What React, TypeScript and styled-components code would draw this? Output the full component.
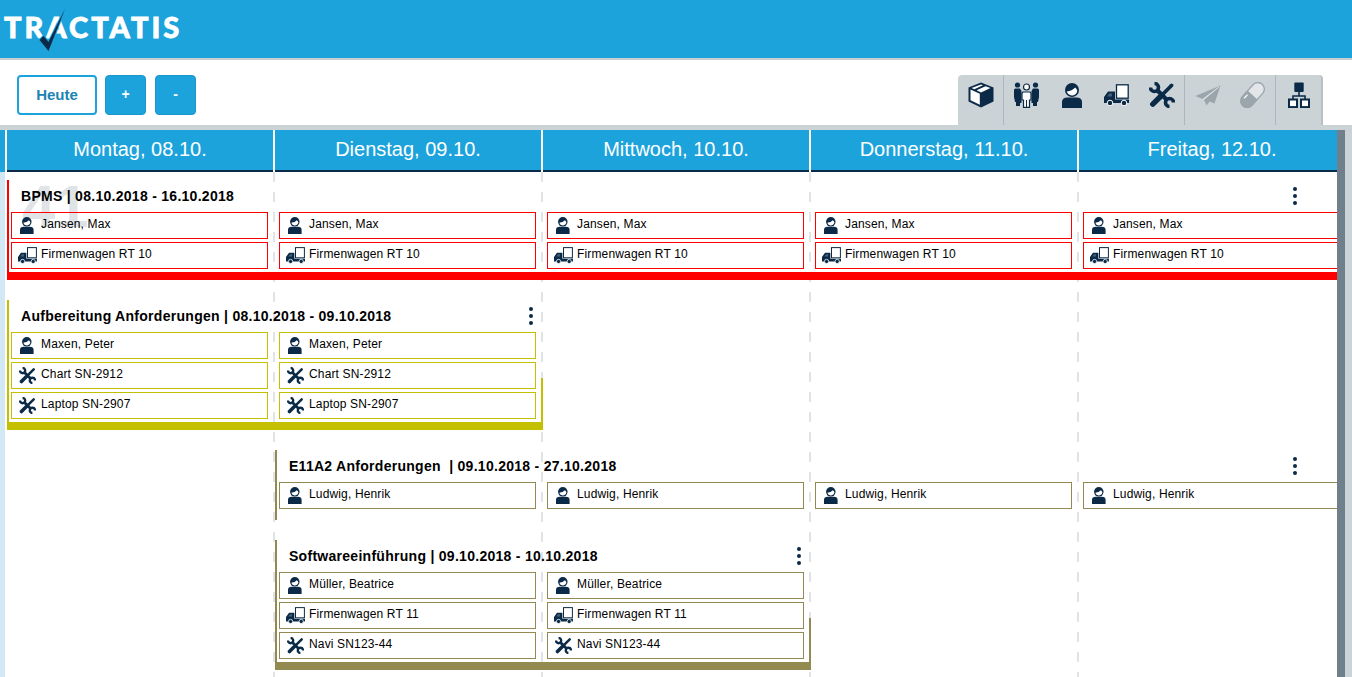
import { FC } from "react";
import styled, { createGlobalStyle } from "styled-components";

const BLUE = "#1ca3dc";
const NAVY = "#0a2a47";
const PANEL = "#ccd3d7";
const DISABLED = "#9aa6ac";
const DASH = "#e0e4e7";

const GlobalStyle = createGlobalStyle`
  html, body {
    margin: 0;
    padding: 0;
    height: 100%;
    overflow: hidden;
    background: #fff;
    font-family: "Liberation Sans", Arial, sans-serif;
  }
  * { box-sizing: border-box; }
`;

const Page = styled.div`
  display: flex;
  flex-direction: column;
  height: 677px;
  overflow: hidden;
`;

const TopBar = styled.header`
  flex: none;
  position: relative;
  height: 60px;
  background: ${BLUE};
  border-bottom: 2px solid #c9cfd2;
`;
const LogoText = styled.span`
  display: block;
  padding: 11px 0 0 4px;
  font-family: Lato, "Liberation Sans", sans-serif;
  font-size: 29px;
  line-height: 32px;
  font-weight: 900;
  letter-spacing: 3px;
  -webkit-text-stroke: 0.8px #fff;
  color: #fff;
`;
const LogoCheck = styled.svg`
  position: absolute;
  left: 0;
  top: 0;
`;

const Toolbar = styled.div`
  flex: none;
  display: flex;
  justify-content: space-between;
  height: 65px;
  padding: 15px 29px 0 17px;
`;
const ButtonRow = styled.div`
  display: flex;
  gap: 8px;
`;
const TodayBtn = styled.button`
  width: 80px;
  height: 40px;
  background: #fff;
  border: 2px solid ${BLUE};
  border-radius: 4px;
  color: #1a84b3;
  font-family: inherit;
  font-size: 15px;
  font-weight: bold;
  padding: 0 0 2px;
`;
const StepBtn = styled.button`
  width: 41px;
  height: 40px;
  background: ${BLUE};
  border: 1px solid #1a96cb;
  border-radius: 4px;
  color: #fff;
  font-family: inherit;
  font-size: 14px;
  font-weight: bold;
  padding: 0 0 3px;

  & + & {
    margin-left: 1px;
  }
`;

const TabPanel = styled.div`
  display: flex;
  height: 50px;
  background: ${PANEL};
  border-radius: 4px 4px 0 0;
  border-right: 2px solid #b8c0c5;
`;
const TabGroup = styled.div`
  display: flex;
  & + & {
    border-left: 1px solid #aeb7bc;
  }
`;
const TabBtn = styled.div`
  display: flex;
  align-items: center;
  justify-content: center;
  width: 45px;
  height: 40px;
`;

const Calendar = styled.div`
  flex: 1;
  display: flex;
  min-height: 0;
  background: ${PANEL};
  padding-top: 5px;
`;
const Main = styled.div`
  display: flex;
  flex-direction: column;
  width: 1337px;
  overflow: hidden;
  background: #fff;
`;
const ScrollThumb = styled.div`
  width: 8px;
  background: #6f7f8c;
`;

const DayRow = styled.div`
  flex: none;
  display: flex;
  height: 42px;
  padding-left: 5px;
  background: linear-gradient(90deg, ${BLUE} 5px, #fff 5px);
`;
const DayCell = styled.div`
  flex: none;
  width: 268px;
  padding-left: 2px;
`;
const DayLabel = styled.div`
  height: 42px;
  background: ${BLUE};
  border-bottom: 2px solid ${NAVY};
  color: #fff;
  font-size: 20px;
  line-height: 38px;
  text-align: center;
`;

const Board = styled.div`
  flex: 1;
  position: relative;
  display: grid;
  grid-template-columns: repeat(5, 268px);
  grid-auto-rows: max-content;
  row-gap: 20px;
  padding: 8px 0 0 2px;
  border-left: 5px solid #d2e9f5;
  background-image:
    linear-gradient(${DASH} 50%, transparent 50%),
    linear-gradient(${DASH} 50%, transparent 50%),
    linear-gradient(${DASH} 50%, transparent 50%),
    linear-gradient(${DASH} 50%, transparent 50%);
  background-size: 2px 20px;
  background-repeat: repeat-y;
  background-position: 268px 0, 536px 0, 804px 0, 1072px 0;
`;
const WeekMark = styled.div`
  position: absolute;
  left: 17px;
  top: 5px;
  font-size: 60px;
  line-height: 1;
  font-weight: bold;
  color: ${DASH};
`;

const Event = styled.section<{ $start: number; $span: number; $color: string; $closed: boolean }>`
  position: relative;
  grid-column: ${(p) => p.$start} / span ${(p) => p.$span};
  border-left: 2px solid ${(p) => p.$color};
  border-bottom: ${(p) => (p.$closed ? `8px solid ${p.$color}` : "none")};
  padding-bottom: ${(p) => (p.$closed ? 3 : 11)}px;

  &::after {
    content: "";
    display: ${(p) => (p.$closed ? "block" : "none")};
    position: absolute;
    right: 0;
    bottom: -8px;
    width: 2px;
    height: 52px;
    background: ${(p) => p.$color};
  }
`;
const TitleRow = styled.div<{ $menuInset: number }>`
  display: flex;
  align-items: center;
  justify-content: space-between;
  height: 32px;
  padding: 0 ${(p) => p.$menuInset}px 0 12px;
`;
const Title = styled.h3`
  margin: 0;
  font-size: 14px;
  line-height: 32px;
  font-weight: bold;
  color: #000;
  letter-spacing: 0.28px;
  white-space: pre;
`;
const Menu = styled.div`
  display: flex;
  flex-direction: column;
  gap: 3px;
`;
const MenuDot = styled.span`
  width: 4px;
  height: 4px;
  border-radius: 50%;
  background: ${NAVY};
`;
const Slots = styled.div<{ $span: number }>`
  display: grid;
  grid-template-columns: repeat(${(p) => p.$span}, 268px);
  row-gap: 3px;
  margin-left: 2px;
`;
const Chip = styled.div<{ $color: string }>`
  display: flex;
  align-items: center;
  width: 257px;
  height: 27px;
  border: 1px solid ${(p) => p.$color};
  font-size: 12px;
  letter-spacing: 0.15px;
  color: #000;
`;
const ChipIcon = styled.span`
  flex: none;
  display: flex;
  align-items: center;
  justify-content: center;
  width: 29px;
  padding-left: 1px;
`;
const ChipText = styled.span`
  padding-bottom: 3px;
  white-space: nowrap;
`;

const PackageIcon: FC = () => (
  <svg width="26" height="26" viewBox="0 0 26 26">
    <path d="M13 0.5 25.5 5.5V19.5L13 25.5 0.5 19.5V5.5Z" fill={NAVY} />
    <path d="M2.5 7.5 11.8 11.8V22.8L2.5 18.2Z" fill="#fff" />
    <path d="M13 2.4 15 3.2 6.3 7.2 3.6 6ZM17.5 4.2 22.5 6.1 13 10.5 8.6 8.3Z" fill="#fff" />
  </svg>
);

const PeopleIcon: FC = () => (
  <svg width="27" height="26" viewBox="0 0 26 26">
    <g fill={NAVY}>
      <circle cx="4" cy="3" r="2.6" />
      <circle cx="22" cy="3" r="2.6" />
      <path d="M0.5 8Q0.5 6.5 2 6.5H6.5L8 9V21H6.5V24H2.5V20H1.5L0.5 15Z" />
      <path d="M25.5 8Q25.5 6.5 24 6.5H19.5L18 9V21H19.5V24H23.5V20H24.5L25.5 15Z" />
    </g>
    <circle cx="13" cy="5" r="3" fill="#fff" stroke={NAVY} strokeWidth="1.2" />
    <path d="M9.5 10H16.5L17.5 11.5V18H16V25.4H10V18H8.5V11.5Z" fill="#fff" stroke={NAVY} strokeWidth="1.2" />
    <path d="M13 18V25" stroke={NAVY} strokeWidth="1" />
  </svg>
);

const PersonIcon: FC<{ size?: number }> = ({ size = 25 }) => (
  <svg width={(size * 20) / 25} height={size} viewBox="0 0 20 25">
    <circle cx="10" cy="7" r="7" fill={NAVY} />
    <path d="M4.8 8.6Q10 8 13.2 4.6 14.8 6 15.3 7.8A5.4 5.4 0 0 1 4.8 8.6Z" fill="#fff" />
    <path d="M0 25V19Q0 14.5 5.5 14.5H14.5Q20 14.5 20 19V25Z" fill={NAVY} />
  </svg>
);

const TruckIcon: FC<{ width?: number }> = ({ width = 25 }) => (
  <svg width={width} height={(width * 22) / 25} viewBox="0 0 25 22">
    <rect x="12.5" y="0.8" width="11.7" height="13.4" fill="#fff" stroke={NAVY} strokeWidth="1.3" />
    <path d="M0 19V13L4 7.5H11V15.5H25V19Z" fill={NAVY} />
    <path d="M3.2 12.5 5.2 9.5H8V12.5Z" fill="#fff" opacity="0.25" />
    <circle cx="6" cy="19" r="2.8" fill={NAVY} stroke="#fff" strokeWidth="1" />
    <circle cx="20" cy="19" r="2.8" fill={NAVY} stroke="#fff" strokeWidth="1" />
  </svg>
);

const ToolsIcon: FC<{ size?: number }> = ({ size = 26 }) => (
  <svg width={size} height={size} viewBox="0 0 26 26" fill="none" stroke={NAVY}>
    <path d="M5.5 1.5A4 4 0 1 1 1.5 5.5" strokeWidth="3.6" />
    <path d="M20.5 24.5A4 4 0 1 1 24.5 20.5" strokeWidth="3.6" />
    <path d="M8 8 18 18" strokeWidth="4.4" />
    <path d="M22.5 3.5 12 14" strokeWidth="3.8" strokeLinecap="round" />
    <path d="M11 15 3.8 22.2" strokeWidth="5.4" strokeLinecap="round" />
  </svg>
);

const PlaneIcon: FC = () => (
  <svg width="26" height="21" viewBox="0 0 26 21">
    <path d="M25.5 0.5 0.5 11 7.5 14 25.5 0.5Z" fill={DISABLED} />
    <path d="M25.5 0.5 9 15 11.5 20.5 14.5 16.5 19.5 18.5Z" fill={DISABLED} />
    <path d="M24 2 9 13.6 8.2 14.6" stroke="#e4e8ea" strokeWidth="0.8" fill="none" />
  </svg>
);

const PillIcon: FC = () => (
  <svg width="25" height="26" viewBox="0 0 25 26">
    <g transform="rotate(42 12.5 13)">
      <rect x="6" y="-1.5" width="13" height="29" rx="6.5" fill="#e2e6e8" stroke={DISABLED} strokeWidth="1.3" />
      <path d="M5.5 13H19.5V21A7 7 0 0 1 5.5 21Z" fill={DISABLED} />
      <path d="M8.5 16V21" stroke="#fff" strokeWidth="1.2" />
    </g>
  </svg>
);

const SitemapIcon: FC = () => (
  <svg width="22" height="26" viewBox="0 0 22 26">
    <rect x="6.3" y="0.5" width="9.4" height="9.4" rx="1" fill={NAVY} />
    <path d="M11 9.5V14M5 18V14H17V18" fill="none" stroke={NAVY} strokeWidth="1.6" />
    <rect x="1" y="17.5" width="8" height="7.6" fill="#fff" stroke={NAVY} strokeWidth="2" />
    <rect x="13" y="17.5" width="8" height="7.6" fill="#fff" stroke={NAVY} strokeWidth="2" />
  </svg>
);

type ResourceKind = "person" | "truck" | "tools";
type Resource = { kind: ResourceKind; label: string };

const days = ["Montag, 08.10.", "Dienstag, 09.10.", "Mittwoch, 10.10.", "Donnerstag, 11.10.", "Freitag, 12.10."];

const max = { kind: "person", label: "Jansen, Max" } as const;
const rt10 = { kind: "truck", label: "Firmenwagen RT 10" } as const;

const events: {
  title: string;
  start: number;
  span: number;
  color: string;
  closed: boolean;
  menuInset: number;
  rows: Resource[][];
}[] = [
  {
    title: "BPMS | 08.10.2018 - 16.10.2018",
    start: 1,
    span: 5,
    color: "#ff0000",
    closed: true,
    menuInset: 50,
    rows: [Array(5).fill(max), Array(5).fill(rt10)],
  },
  {
    title: "Aufbereitung Anforderungen | 08.10.2018 - 09.10.2018",
    start: 1,
    span: 2,
    color: "#c4c000",
    closed: true,
    menuInset: 10,
    rows: [
      Array(2).fill({ kind: "person", label: "Maxen, Peter" }),
      Array(2).fill({ kind: "tools", label: "Chart SN-2912" }),
      Array(2).fill({ kind: "tools", label: "Laptop SN-2907" }),
    ],
  },
  {
    title: "E11A2 Anforderungen  | 09.10.2018 - 27.10.2018",
    start: 2,
    span: 4,
    color: "#938a52",
    closed: false,
    menuInset: 50,
    rows: [Array(4).fill({ kind: "person", label: "Ludwig, Henrik" })],
  },
  {
    title: "Softwareeinführung | 09.10.2018 - 10.10.2018",
    start: 2,
    span: 2,
    color: "#938a52",
    closed: true,
    menuInset: 10,
    rows: [
      Array(2).fill({ kind: "person", label: "Müller, Beatrice" }),
      Array(2).fill({ kind: "truck", label: "Firmenwagen RT 11" }),
      Array(2).fill({ kind: "tools", label: "Navi SN123-44" }),
    ],
  },
];

const ResourceIcon: FC<{ kind: ResourceKind }> = ({ kind }) => {
  if (kind === "person") return <PersonIcon size={17} />;
  if (kind === "truck") return <TruckIcon width={19} />;
  return <ToolsIcon size={17} />;
};

export default function App() {
  return (
    <Page>
      <GlobalStyle />
      <TopBar>
        <LogoText>TRACTATIS</LogoText>
        <LogoCheck width="80" height="58" viewBox="0 0 80 58">
          <path
            d="M65 9 48.5 51 39.5 40 43.5 36 48.5 42Z"
            fill={NAVY}
            stroke={BLUE}
            strokeWidth="2"
            paintOrder="stroke"
          />
        </LogoCheck>
      </TopBar>

      <Toolbar>
        <ButtonRow>
          <TodayBtn>Heute</TodayBtn>
          <StepBtn>+</StepBtn>
          <StepBtn>-</StepBtn>
        </ButtonRow>
        <TabPanel>
          <TabGroup>
            <TabBtn><PackageIcon /></TabBtn>
          </TabGroup>
          <TabGroup>
            <TabBtn><PeopleIcon /></TabBtn>
            <TabBtn><PersonIcon /></TabBtn>
            <TabBtn><TruckIcon /></TabBtn>
            <TabBtn><ToolsIcon /></TabBtn>
          </TabGroup>
          <TabGroup>
            <TabBtn><PlaneIcon /></TabBtn>
            <TabBtn><PillIcon /></TabBtn>
          </TabGroup>
          <TabGroup>
            <TabBtn><SitemapIcon /></TabBtn>
          </TabGroup>
        </TabPanel>
      </Toolbar>

      <Calendar>
        <Main>
          <DayRow>
            {days.map((day) => (
              <DayCell key={day}>
                <DayLabel>{day}</DayLabel>
              </DayCell>
            ))}
          </DayRow>
          <Board>
            <WeekMark>41</WeekMark>
            {events.map((ev) => (
              <Event key={ev.title} $start={ev.start} $span={ev.span} $color={ev.color} $closed={ev.closed}>
                <TitleRow $menuInset={ev.menuInset}>
                  <Title>{ev.title}</Title>
                  <Menu>
                    <MenuDot />
                    <MenuDot />
                    <MenuDot />
                  </Menu>
                </TitleRow>
                <Slots $span={ev.span}>
                  {ev.rows.flat().map((res, i) => (
                    <Chip key={i} $color={ev.color}>
                      <ChipIcon>
                        <ResourceIcon kind={res.kind} />
                      </ChipIcon>
                      <ChipText>{res.label}</ChipText>
                    </Chip>
                  ))}
                </Slots>
              </Event>
            ))}
          </Board>
        </Main>
        <ScrollThumb />
      </Calendar>
    </Page>
  );
}
